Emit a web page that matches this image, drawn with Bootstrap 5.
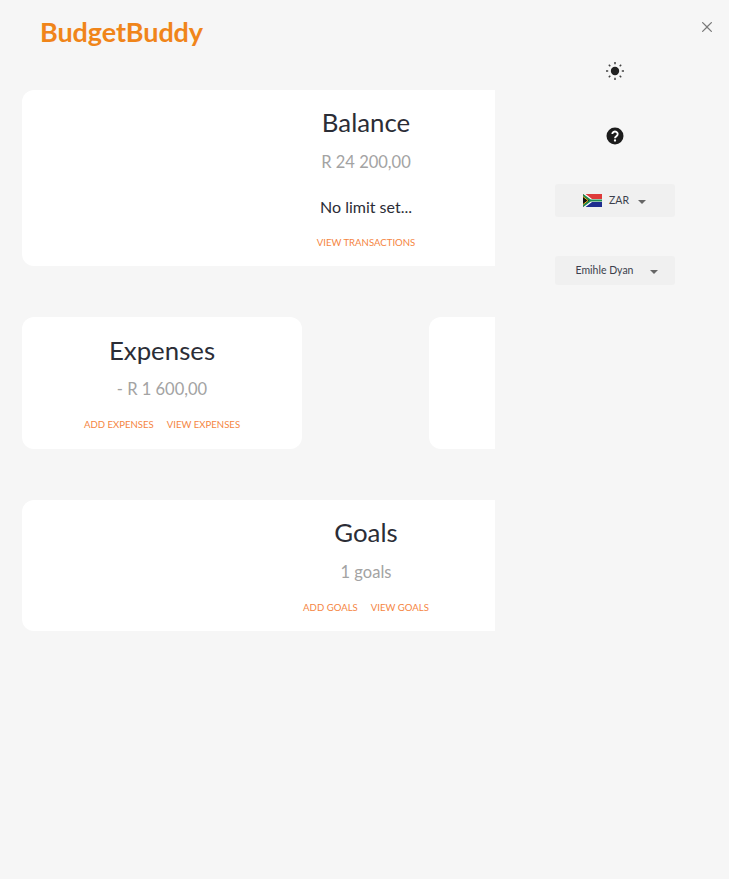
<!DOCTYPE html>
<html lang="en"><head><meta charset="utf-8"><title>BudgetBuddy</title>
<link href="https://cdn.jsdelivr.net/npm/bootstrap@5.3.0/dist/css/bootstrap.min.css" rel="stylesheet">
<style>
html,body{height:100%}
body{background:#f6f6f6;font-family:Lato,"Liberation Sans",sans-serif;color:#2b2d36;overflow:hidden}
.shell{width:729px;height:879px}
.mainpane{width:495px;height:879px;overflow:hidden;flex:none}
.brand{font-size:27px;font-weight:700;color:#f0851a;line-height:32px;padding:16px 0 0 40px;height:90px;letter-spacing:-.1px}
.stack{width:687px;margin-left:22px;display:flex;flex-direction:column;gap:51px}
.tile{background:#fff;border-radius:12px;text-align:center;padding-top:15px}
.tile-balance{height:176px;width:688px}
.tile-half{height:132px;width:280px;padding-top:16px}
.tile-goals{height:131px;width:688px}
.ttl{font-size:25.8px;font-weight:400;line-height:34px;margin:0 0 9px}
.tile-half .ttl{margin-bottom:8px}
.amt{font-size:16.5px;line-height:28px;color:#a3a3a3;margin:0}
.note{font-size:16px;line-height:24px;margin:19px 0 17px;color:#2b2d36}
.acts{font-size:9.6px;line-height:14px;color:#f5853f;text-transform:uppercase;margin-top:15px;display:flex;justify-content:center;gap:13px}
.note + .acts{margin-top:0}
.side{flex:1;position:relative;display:flex;flex-direction:column;align-items:center;padding:60px 0 0 6px}
.btn-close{position:absolute;top:18px;right:13px;width:10px;height:10px;background-size:10px}
.ico{height:22px;display:flex;align-items:center;justify-content:center}
.ico + .ico{margin-top:43px}
.pick{width:120px;background:#f0f0f0;border:0;border-radius:3px;display:flex;align-items:center;justify-content:center;font-size:10.5px;color:#3b3f4c;padding:0}
.pick-a{height:33px;margin-top:37px;gap:7px;padding-right:1px}
.pick-b{height:29px;margin-top:39px;gap:17px;padding-left:4px}
.caret{width:0;height:0;border:4px solid transparent;border-top-color:#666;border-bottom:0;margin-top:2px}
.pick-a .caret{margin-left:2px}
</style></head><body>
<div class="shell d-flex">
<div class="mainpane">
<div class="brand">BudgetBuddy</div>
<div class="stack">
<div class="tile tile-balance"><h2 class="ttl">Balance</h2><p class="amt">R 24 200,00</p><p class="note">No limit set...</p><div class="acts"><span>View transactions</span></div></div>
<div class="d-flex justify-content-between">
<div class="tile tile-half"><h2 class="ttl">Expenses</h2><p class="amt">- R 1 600,00</p><div class="acts"><span>Add expenses</span><span>View expenses</span></div></div>
<div class="tile tile-half"></div>
</div>
<div class="tile tile-goals"><h2 class="ttl">Goals</h2><p class="amt">1 goals</p><div class="acts"><span>Add goals</span><span>View goals</span></div></div>
</div>
</div>
<div class="side">
<button class="btn-close" type="button" aria-label="Close"></button>
<div class="ico"><svg width="20" height="20" viewBox="0 0 20 20"><circle cx="10" cy="10" r="4.200" fill="#222"/><g stroke="#444" stroke-width="1.500"><path d="M10 1v2.200M10 16.800V19M1 10h2.200M16.800 10H19M3.800 3.800l1.500 1.500M14.700 14.700l1.500 1.500M3.800 16.200l1.500-1.500M14.700 5.300l1.500-1.500"/></g></svg></div>
<div class="ico"><svg width="18" height="18" viewBox="0 0 18 18"><circle cx="9" cy="9" r="8.500" fill="#1c1c1c"/><path d="M6.300 7a2.700 2.500 0 1 1 4.200 2.100c-1 .7-1.500 1-1.500 2.100" fill="none" stroke="#fff" stroke-width="1.900"/><circle cx="9" cy="13.500" r="1.150" fill="#fff"/></svg></div>
<div class="pick pick-a"><svg width="19" height="13" viewBox="0 0 19 13"><rect width="19" height="6.500" fill="#de3a3a"/><rect y="6.500" width="19" height="6.500" fill="#1f2d8f"/><path d="M0 0l8 6.500L0 13z" fill="#111"/><path d="M0 0h2.500l6.500 5H19v3H9l-6.500 5H0l8-6.500z" fill="#fff"/><path d="M0 1l7.500 5.500H19M0 12l7.500-5.500" stroke="#1f8a50" stroke-width="2" fill="none"/><path d="M0 2.500L5 6.500 0 10.500" stroke="#f2b21f" fill="none"/></svg><span>ZAR</span><span class="caret"></span></div>
<div class="pick pick-b"><span>Emihle Dyan</span><span class="caret"></span></div>
</div>
</div>
<script src="https://cdn.jsdelivr.net/npm/bootstrap@5.3.0/dist/js/bootstrap.bundle.min.js"></script>
</body></html>
